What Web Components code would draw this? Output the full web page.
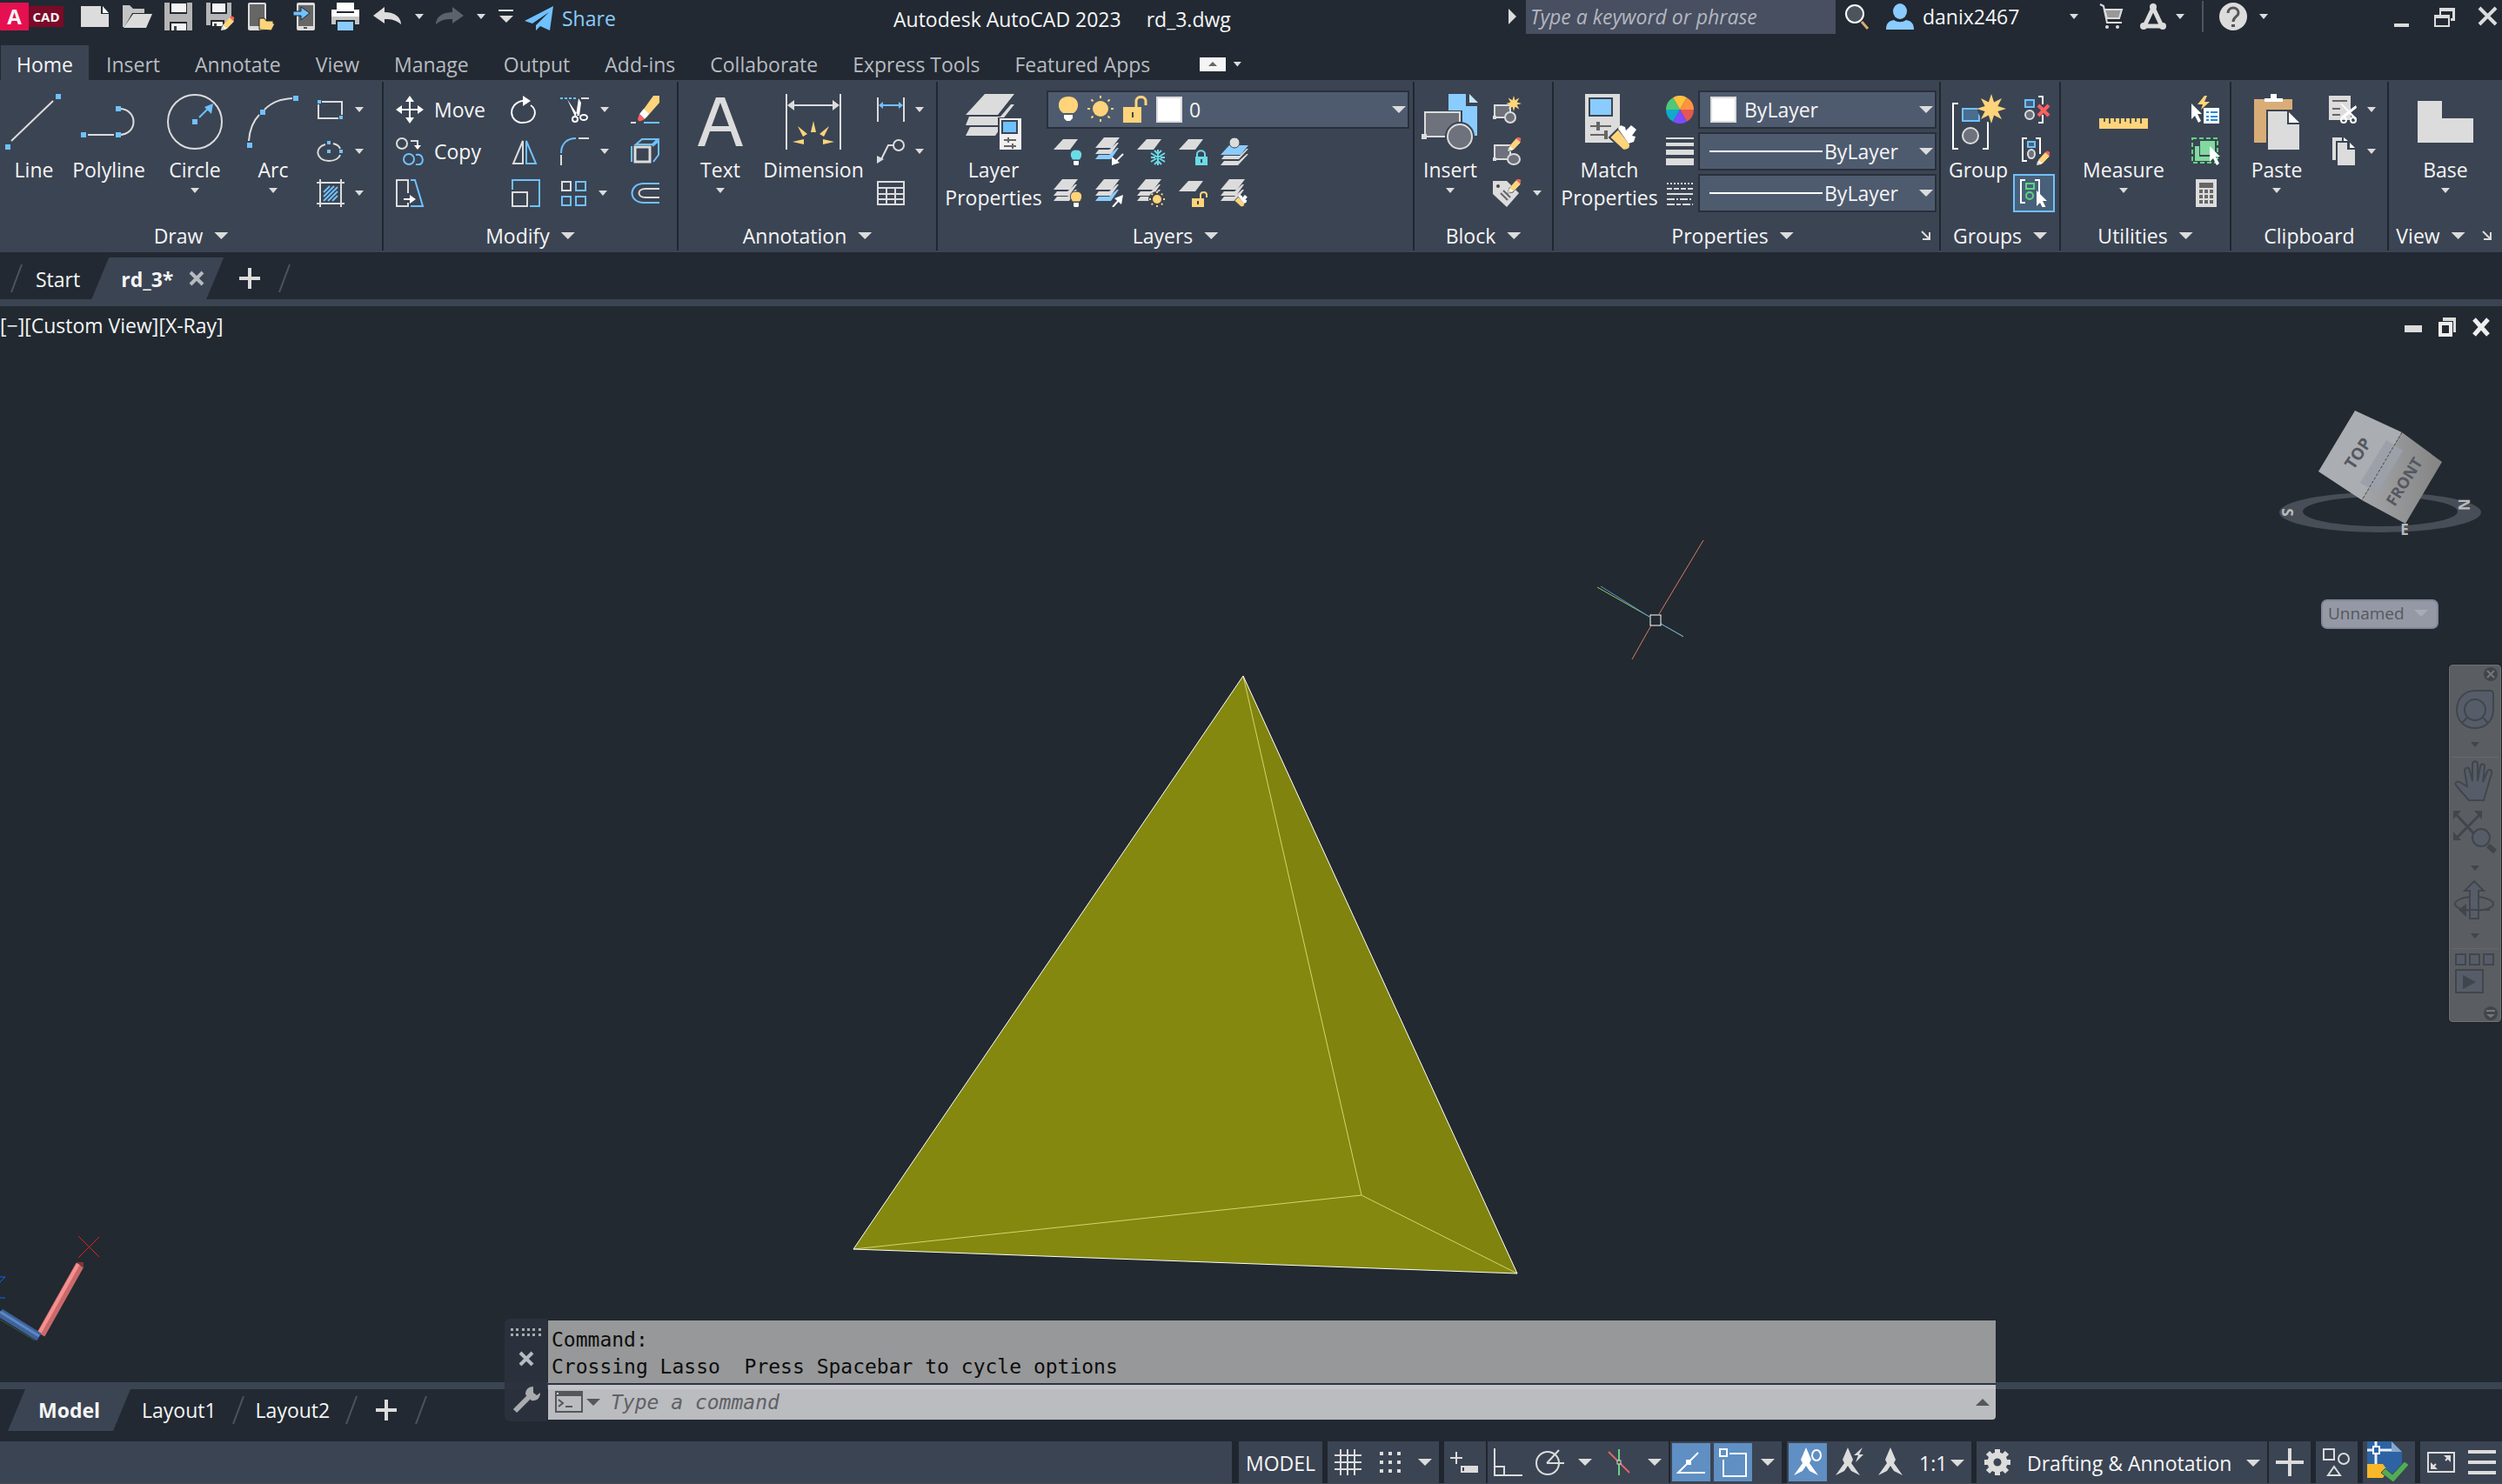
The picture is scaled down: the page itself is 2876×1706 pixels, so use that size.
<!DOCTYPE html>
<html lang="en">
<head>
<meta charset="utf-8">
<title>Autodesk AutoCAD 2023</title>
<style>
:root{--bg:#222932;--panel:#3b4453;--field:#4e5b6f;--edge:#29303b;--gap:#20262f;--text:#f5f5f5;--muted:#b8bbc0;--light:#dcdcdc;--blue:#6fc1ff;--hot:#5f8fc3}
html,body{margin:0;height:100%}
body{background:var(--bg);color:var(--text);font:23px/32px "Open Sans","Noto Sans",sans-serif;overflow:hidden}
</style>
</head>
<body>
<cad-app></cad-app>
<script>
const L='#dcdcdc',B='#6fc1ff',Y='#ffd47a',P='#3b4453',C='#6bdbe6';
const st=(d,c=L,w=2)=>`<path d="${d}" fill="none" stroke="${c}" stroke-width="${w}"/>`;
const fl=(d,c=L,x='')=>`<path d="${d}" fill="${c}" ${x}/>`;
const rc=(x,y,w,h,c=L,e='')=>`<rect x="${x}" y="${y}" width="${w}" height="${h}" fill="${c}" ${e}/>`;
const el=(x,y,rx,ry,c=L,w=2,f='none')=>`<ellipse cx="${x}" cy="${y}" rx="${rx}" ry="${ry}" fill="${f}" stroke="${c}" stroke-width="${w}"/>`;
const pencil=(x,y)=>`<g transform="translate(${x} ${y})">${fl('M0 16l2-6 8-8 5 4-9 9z','#fff',`stroke="${P}" stroke-width="1"`)}${fl('M2 10l8-9 5 4-8 9z',Y)}${fl('M10 1l1-1c3-1 5 1 4 3l-1 2z','#ff5f5f')}${fl('M0 16l1-5 4 4z',L)}</g>`;
const layers=(c3=L)=>fl('M10 0h18l-9 12H0z')+fl('M4 14l-4 5h18l9-13h-2l-9 8z')+fl('M4 20l-4 5h18l9-13h-2l-9 8z',c3);
const sheet=fl('M11 2h17l-9 12H0z');
const bulb=(c,x,y)=>`<g transform="translate(${x} ${y})">${fl('M6 0c8 0 8 8 4 12H2C-2 8-2 0 6 0z',c,`stroke="${P}"`)}${fl('M3 13h6v4l-2 2H5l-2-2z','#fff')}</g>`;
const cursor=(x,y)=>`<g transform="translate(${x} ${y})">${fl('M0 0v18l4-4 4 8 3-2-4-8h5z','#fff')}</g>`;
const sunrays=(cx,cy,r1,r2,w)=>{let s='';for(let i=0;i<8;i++){const a=i*Math.PI/4;s+=`M${cx+r1*Math.cos(a)} ${cy+r1*Math.sin(a)}L${cx+r2*Math.cos(a)} ${cy+r2*Math.sin(a)}`}return st(s,Y,w)};
const star=(cx,cy,r,q)=>{let s='';for(let i=0;i<16;i++){const a=i*Math.PI/8-Math.PI/2,k=i%2?q:r;s+=`${i?'L':'M'}${(cx+k*Math.cos(a)).toFixed(1)} ${(cy+k*Math.sin(a)).toFixed(1)}`}return fl(s+'z',Y)};
const brush=(x,y,s=1)=>`<g transform="translate(${x} ${y}) scale(${s})">${fl('M2 14l10-10 14 18c1 6-6 8-9 6z',Y,`stroke="${P}" stroke-width="2"`)}${fl('M12 4l3-4 5 2 1 4 6-6 6 5-5 7 4 1-2 6-6 2z','#fff')}</g>`;
const nd='#41464c',nf='#565d69';

const ICONS={
new:[32,32,fl('M0 4h23v9h9v15H0z')+fl('M25 4l7 8h-7z','#fff')],
open:[34,32,fl('M0 28V3h8l4 4h13v5H11L2 28z','#c4c4c4')+fl('M12 13h22l-7 16H1z')],
save:[32,32,fl('M0 0h32v32H0z','#b5b5b5')+rc(6,0,20,13,'#222932')+rc(8,1,17,10,'#f4f4f4')+rc(6,22,20,10,'#222932')+rc(8,24,17,8,'#f4f4f4')+rc(11,27,3,5,'#444')],
saveas:[34,32,fl('M0 0h29v26H0z','#b5b5b5')+rc(5,0,19,13,'#222932')+rc(7,1,15,10,'#f4f4f4')+rc(5,20,16,8,'#222932')+rc(7,22,12,5,'#f4f4f4')+rc(9,24,3,3,'#444')+pencil(17,16)],
openm:[32,32,rc(0,0,21,32,L,'rx="2"')+rc(2,2,17,25,'#666')+fl('M13 31V18h6l2 3h8v3h2l-4 8z',Y,'stroke="#222932"')],
savem:[32,32,rc(8,0,21,32,L,'rx="2"')+rc(10,3,17,24,'#666')+rc(16,28,4,2,'#555')+fl('M4 10h9V5l10 7-10 8v-5H4z',B,'stroke="#222932"')],
print:[32,32,rc(6,0,20,10,'#fff')+fl('M0 8h6v4h20V8h6v8H0z','#fff')+fl('M0 16h32v9h-5v-5H5v5H0z','#c6c6c6')+rc(7,22,18,10,'#8accff')],
undo:[33,32,fl('M0 15L13 5v6c12 0 19 6 19 14-6-5-10-6-19-6v5z')],
redo:[33,32,fl('M33 15L20 5v6C8 11 1 17 1 25c6-5 10-6 19-6v5z','#5c6269')],
custom:[18,16,rc(0,0,17,2)+fl('M1 7h16l-8 8z')],
share:[34,32,fl('M33 2L0 19l9 3L28 9 13 24v6l5-5 11 5z',B)],
expander:[10,18,fl('M0 0l9 9-9 9z')],
search:[32,32,el(12,13,10,10,'#fff',2,'#4c545e')+st('M20 22l7 8','#d9ad72',3)],
user:[34,32,el(17,10,8,9,'#8accff',0,'#8accff')+fl('M1 31c0-8 4-10 9-11 4 3 10 3 14 0 5 1 9 3 9 11z','#8accff')],
cart:[32,32,st('M3 2l4 2 4 19h17','#dcdcdc')+fl('M8 8h20l-3 10H11z','#999',`stroke="${L}" stroke-width="2"`)+el(11,28,2,2,L,0,L)+el(23,28,2,2,L,0,L)],
adsk:[32,32,st('M16 6L6 27h20z',L,5)+el(16,5,4,4,L,0,L)+el(5,27,4,4,L,0,L)+el(27,27,4,4,L,0,L)],
help:[34,34,el(17,17,16,16,L,0,'#dcdcdc')+st('M11 13c0-8 12-8 12 0 0 4-6 4-6 10','#555',3)+rc(15,26,4,3,'#555')],
min:[32,32,rc(8,24,17,4)],
restore:[32,32,fl('M10 6h18v15h-5v-3h2v-8H12v4h-2z')+`<path d="M5 15h16v12H5z" fill="none" stroke="${L}" stroke-width="2"/>`+rc(4,14,18,4)],
close:[32,32,st('M6 6l19 19M25 6L6 25',L,4)],
tinyup:[30,16,rc(0,0,30,16,'#f5f5f5')+fl('M10 10l5-5 5 5z','#666')],
slash:[14,32,st('M13 0L1 32','#4a5462',2)],
x:[18,18,st('M2 2l14 14M16 2L2 16','#b7bac0',4)],
plus:[24,24,rc(10,0,4,24)+rc(0,10,24,4)],

line:[66,64,st('M7 54L55 8')+rc(0,58,6,6,B)+rc(58,0,6,6,B)],
polyline:[64,64,st('M8 47h30M44 17c22 0 22 30 0 30')+rc(0,44,6,6,B)+rc(40,14,6,6,B)+rc(40,44,6,6,B)],
circle:[64,64,el(32,32,31,31)+rc(29,29,6,6,B)+st('M37 27l10-10',B)+fl('M53 11l-2 12-8-8z',B)],
arc:[60,64,st('M2 54C3 40 8 30 14 24M20 18C30 8 40 6 52 5')+rc(0,56,6,6,B)+rc(15,18,6,6,B)+rc(53,2,6,6,B)],
rect:[32,32,st('M6 7h23v15M2 10v16h23')+rc(1,5,4,4,B)+rc(26,23,4,4,B)],
ellipse:[32,32,st('M10 8C-3 11-1 27 14 27c7 0 12-3 13-7M19 7c4 1 7 3 8 6')+rc(12,4,4,4,B)+rc(12,14,4,4,B)+rc(26,14,4,4,B)],
hatch:[32,32,st('M4 0v32M28 0v32M0 4h32M0 28h32')+st('M8 15l7-7M8 20L20 8M8 25L24 9M13 25l11-11M18 25l6-6',B,2)],
move:[32,32,st('M16 4v24M4 16h24','#fff')+fl('M16 0l5 7H11zM16 32l5-7H11zM0 16l7-5v10zM32 16l-7-5v10z','#fff')],
copy:[32,32,el(7,7,6,6)+st('M17 4h8v6')+fl('M25 14l-4-5h8z','#fff')+el(15,25,6,6,B)+st('M23 20c10-3 11 14 0 11',B)],
stretch:[34,32,st('M14 16V1H1v30h13v-4')+st('M17 1h5l9 30H17',B)+st('M9 23h8','#fff')+fl('M23 23l-7-5v10z','#fff')],
rotate:[34,32,st('M13 6C-4 10-2 31 14 31c14 0 18-14 9-20M13 6h4','#fff')+fl('M14 0l9 6-9 6z','#fff')],
mirror:[32,32,st('M14 4v26H3z')+st('M18 4v26h11z',B)],
scale:[34,32,st('M2 12V1h31v30H22',B)+st('M2 15h17v16H2z')],
trim:[34,32,rc(0,2,3,2,B)+rc(5,2,3,2,B)+rc(10,2,3,2,B)+rc(15,2,3,2,B)+rc(24,2,9,2)+`<g transform="translate(8 3)">${fl('M0 1l12 18-3 2zM13 0l-3 20h4l2-15z','#fff')}${el(9,24,3,3,'#fff')}${el(19,22,4,3,'#fff')}</g>`],
fillet:[34,32,st('M1 18C1 7 8 1 18 1',B)+st('M21 1h12M1 20v12')],
array:[32,32,st('M18 3h11v10H18zM2 20h10v10H2zM18 20h11v10H18z',B)+st('M2 3h10v10H2z')],
erase:[34,32,fl('M26 0h7v8L18 25l-7-4z',Y)+fl('M15 15l-5 6 6 6 5-6z','#fff')+fl('M10 21l-2 6c1 4 5 2 8 0z','#ff6060')+rc(0,30,6,2)+rc(15,30,18,2,B)],
box:[34,32,st('M5 11h17v17H5z',L,3)+st('M1 10v18M6 8l7-6h18l-6 6zM25 10l7-6v16l-6 8',B)],
offset:[34,32,st('M33 5H15c-18 0-18 22 0 22h18',B)+st('M33 11H17c-10 0-10 10 0 10h16')],

text:[64,64,fl('M6 60L27 4h10l21 56h-8l-6-17H20l-6 17zM22 37h20L32 10z','#dcdcdc','fill-rule="evenodd"')],
dim:[64,64,st('M1 0v64M63 0v64M6 13h52')+fl('M2 13l8-6v12zM62 13l-8-6v12z')+fl('M32 31l3 13h-6zM14 37l11 9-5 3zM50 37l-11 9 5 3zM8 55l13-3v6zM56 55l-13-3v6z',Y)],
dims:[32,32,st('M1 2v28M31 2v28')+st('M4 11h24',B)+fl('M2 11l5-4v8zM30 11l-5-4v8z',B)],
leader:[32,32,el(25,9,6,6)+st('M19 9h-6L5 25')+fl('M0 30v-9l8 4z')],
table:[32,32,st('M1 3h30v26H1zM1 10h30M1 17h30M1 23h30M11 10v19M21 10v19')],
layerprops:[64,64,fl('M22 0h34L37 24H0zM4 26L0 36h37l19-24h-4L40 26z')+fl('M5 38l-5 10h34l4-6V38z')+rc(37,27,28,37,P)+rc(39,28,25,36,'#f0f0f0')+rc(41,30,19,16,P)+rc(43,32,15,12,B)+st('M44 53h14M44 60h14M49 50v6M54 57v6','#666')+st('M0 25h38l18-23M3 37h34',P,2)],
bulb:[24,32,fl('M11 1c13 0 14 14 6 19H5C-3 15-2 1 11 1z',Y)+fl('M6 22h10v4l-3 3H9l-3-3z','#fff')],
sun:[32,32,el(16,15,9,9,Y,0,Y)+sunrays(16,15,12,15,2)],
unlock:[32,32,rc(2,13,21,18,Y)+st('M17 13V6c0-6 11-6 11 0v5',Y,3)+rc(12,19,2,6,'#444')],
swatch:[30,32,rc(1,2,28,28,'#fff',`stroke="${L}" stroke-width="2"`)],
l1:[34,32,sheet+bulb(C,20,14)],
l2:[34,32,layers('#8accff')+st('M32 19l-8 8','#fff')+fl('M19 32V22l9 7z','#fff')],
l3:[34,32,sheet+st('M24 14v18M16 18l16 10M32 18L16 28M20 15l4 4 4-4M20 31l4-4 4 4M16 23h5M27 23h5',C,2)],
l4:[34,32,sheet+rc(19,22,14,10,C)+st('M21 23v-4c0-5 9-5 9 0v4',C)+rc(25,25,2,4,'#345')],
l5:[34,32,fl('M10 9h22l-9 11H0z','#8accff')+el(16,6,6,6,P,1,L)+fl('M4 21l-3 4h20l11-12h-2l-8 8zM4 27l-4 5h20l12-13h-2l-9 8z')],
l6:[34,32,layers()+bulb(Y,20,14)],
l7:[34,32,layers('#8accff')+st('M20 32l8-9','#fff')+fl('M32 18l-2 11-8-7z','#fff')],
l8:[34,32,layers()+el(23,23,10,9,P,0,P)+el(23,23,5,5,Y,0,Y)+sunrays(23,23,7,9,2)],
l9:[34,32,sheet+rc(15,22,14,10,Y)+st('M25 22v-4c0-4 7-4 7 0v3',Y)+rc(21,25,2,4,'#444')],
l10:[34,32,layers()+brush(15,18,.48)],
insert:[66,64,fl('M31 0h20v14h13v34H52L42 20H31z','#8accff')+fl('M55 0l10 10H55z','#c5e6ff')+rc(2,19,45,33,P)+rc(4,21,40,28,'#6d727c',`stroke="${L}" stroke-width="2"`)+rc(0,46,6,6)+el(44,49,17,17,P,0,P)+el(44,49,14,14,L,2,'#6d727c')],
bnew:[34,32,rc(2,11,18,14,'#6d727c',`stroke="${L}" stroke-width="2"`)+rc(0,23,4,4)+el(20,25,6,6,L,2,'#6d727c')+star(24,9,9,4)],
bedit:[34,32,rc(2,9,18,16,'#6d727c',`stroke="${L}" stroke-width="2"`)+rc(0,23,4,4)+el(24,25,7,6,L,2,'#6d727c')+pencil(17,0)],
battr:[34,32,fl('M0 2h16l14 14-14 16L0 17z')+el(6,8,2,2,'#444',0,'#444')+st('M9 16l8 8M12 13l8 8','#666')+pencil(17,0)],
match:[64,64,rc(4,0,40,56)+rc(8,4,28,22,P)+rc(10,6,24,18,'#8accff')+st('M10 37h24M10 47h18','#666')+rc(17,32,4,10,'#666')+rc(26,42,4,10,'#666')+brush(30,36)],
wheel:[32,32,['#ffc13d','#ff9440','#e65656','#7b4cff','#10aacc','#4fc978'].map((c,i)=>{const a=(i*60-120)*Math.PI/180,b=a+Math.PI/3;return fl(`M16 16L${16+16*Math.cos(a)} ${16+16*Math.sin(a)}A16 16 0 0 1 ${16+16*Math.cos(b)} ${16+16*Math.sin(b)}z`,c)}).join('')],
weights:[32,32,rc(0,0,32,2)+rc(0,6,32,4)+rc(0,14,32,6)+rc(0,24,32,8)],
types:[32,32,`<g stroke="${L}" stroke-width="2"><path d="M1 5h30" stroke-dasharray="2 2"/><path d="M1 11h30" stroke-dasharray="6 2"/><path d="M1 17h30"/><path d="M1 23h30" stroke-dasharray="9 2 2 2"/><path d="M1 29h30" stroke-dasharray="9 2 5 2"/></g>`],
strokeline:[132,4,rc(0,1,130,2,'#fff')],
launch:[12,12,st('M1 1l8 8M10 2v8H2',L,2)],
group:[64,64,st('M9 11H3v52h6M37 63h6V30','#fff')+rc(14,17,19,14,'#4a6d90',`stroke="${B}" stroke-width="2"`)+el(23,48,9,9,L,2,'#6d727c')+`<circle cx="48" cy="16" r="17" fill="${P}"/>`+star(47,17,17,8)],
ungroup:[34,32,rc(5,5,10,8,'#42617f',`stroke="${B}" stroke-width="2"`)+el(10,22,5,5,L,2,'#6d727c')+st('M20 1h5v9M20 31h5v-9','#fff')+st('M20 11l12 12M32 11L20 23','#ff5f5f',4)],
gedit:[34,32,st('M7 1H2v26h5M17 1h5v18','#fff')+rc(8,5,8,6,'#42617f',`stroke="${B}" stroke-width="2"`)+el(12,19,4,5,L,2,'#6d727c')+pencil(18,16)],
gsel:[34,32,st('M7 1H2v26h5M18 1h5v16','#fff')+rc(8,5,9,6,'none','stroke="#5ad67d" stroke-width="2"')+el(12,19,4,4,'#5ad67d',2)+cursor(20,13)],
ruler:[64,64,rc(4,28,56,12,Y)+st('M10 28v4M16 28v6M22 28v4M28 28v6M34 28v4M40 28v6M46 28v4M52 28v6','#555')],
qsel:[34,32,cursor(0,9)+fl('M15 0L7 10h6l-2 6 10-9h-6l3-7z',Y)+rc(14,14,18,18,'#fff')+st('M17 19h3M22 19h8M17 24h3M22 24h8M17 28h3M22 28h8','#1f8ae0')],
selall:[34,32,`<rect x="1" y="1" width="29" height="28" fill="none" stroke="#5ad67d" stroke-width="2" stroke-dasharray="5 3"/>`+fl('M4 10h5v12h12v5H4z','#82d9a0')+rc(10,4,17,16,'#82d9a0')+cursor(21,10)],
calc:[32,32,rc(5,0,24,32)+rc(9,4,16,6,'#666')+`<g fill="#666">${[12,18,24].map(y=>[9,15,21].map(x=>rc(x,y,4,4,'#666')).join('')).join('')}</g>`],
paste:[64,64,fl('M6 6h44v12H20v38H6z','#d9ad78')+fl('M18 9V5h7V0h7v5h7v4z','#fff')+rc(20,18,40,46,P)+fl('M22 20h22v15h14v29H22z')+fl('M46 21l12 12H46z','#fff')],
cut:[32,32,rc(0,0,25,28)+st('M4 6h17M4 15h9M4 22h9','#666')+`<g transform="translate(12 9)">${fl('M1 0h2l17 17-2 2zM19 2l1 3L5 17l-3-2z','#fff')}${el(5,19,3,3,'#fff')}${el(16,19,3,3,'#fff')}</g>`],
copyc:[32,32,fl('M4 0h11v4H8v22H4z')+fl('M17 0l5 4h-5z','#fff')+fl('M10 6h11v8h9v18H10z')+fl('M24 6l6 6h-6z','#fff')],
base:[64,64,fl('M0 8h28v20h36v28H0z')],

grid:[32,32,st('M0 8h31M0 16h31M0 24h31M7 1v30M15 1v30M23 1v30',L,2)],
snap:[32,32,`<g>${[4,14,24].map(y=>[4,14,24].map(x=>rc(x,y,4,4)).join('')).join('')}</g>`],
dyn:[34,34,st('M0 12h14M7 5v14')+rc(12,21,20,8)+rc(14,23,2,4,P)],
ortho:[34,34,st('M1 1v31h32M1 22h11v10')],
polar:[34,32,el(14,17,13,13)+st('M13 17h20M13 17L27 2')],
iso:[30,32,st('M2 4l24 24','#e06666')+st('M14 1v30','#62d77f')+rc(12,14,4,4,P,`stroke="${L}"`)],
track:[34,32,st('M25 5L2 28h31','#fff')+rc(11,13,6,6,'#fff')],
osnap:[34,34,st('M13 7h19v26H6V14','#fff')+st('M2 2h8v8H2z','#fff')],
anno:[34,34,fl('M15 0l6 14-2 4 10 14-10-5-4-6-4 6-10 5L11 18l-2-4z','#fff')+el(27,9,5,6,'#fff')],
anno2:[34,34,fl('M15 0l6 14-2 4 10 14-10-5-4-6-4 6-10 5L11 18l-2-4z')+fl('M32 0l-10 9h5l-3 8 9-9h-5z')],
anno3:[32,34,fl('M15 0l6 14-2 4 10 14-10-5-4-6-4 6-10 5L11 18l-2-4z')],
gear:[32,32,el(16,16,8,8,L,7)+`<g stroke="${L}" stroke-width="6"><path d="M16 1v5M16 26v5M1 16h5M26 16h5M5 5l4 4M23 23l4 4M27 5l-4 4M9 23l-4 4"/></g>`],
bigplus:[32,32,rc(14,0,4,32)+rc(0,14,32,4)],
shapes:[34,34,st('M2 2h12v12H2z')+el(25,13,6,6)+st('M14 22l7 10H7z')],
trusted:[50,48,fl('M0 0h28v12h12v20l-6 6H0z','#2d63a3')+fl('M28 0l12 12H28z','#86a8cf')+fl('M0 26h18l6 8-6 8H0z','#f7b728')+st('M0 10h28M10 0v26','#e8f0f8',3)+rc(7,6,7,8,'#2d63a3','stroke="#fff" stroke-width="2"')+fl('M16 36l5-5 8 7 14-15 5 4-18 20z','#50ad54','stroke="#3b4453"')],
expand:[34,32,st('M2 5h30v22H2z')+fl('M28 8v8l-8-8zM5 24v-8l8 8z')+st('M27 9l-5 5M6 23l5-5')],
menu:[32,32,rc(0,2,32,4)+rc(0,14,32,4)+rc(0,26,32,4)],

grip:[36,10,[0,6,13,19,25,32].map(x=>rc(x,0,3,3,'#a9abae')+rc(x,6,3,3,'#a9abae')).join('')],
wrench:[32,32,st('M3 28L20 11','#a9abae',6)+fl('M15 9c0-6 4-9 9-9v7l4 3 4-3c0 7-5 10-10 9z','#a9abae')],
prompt:[32,26,rc(1,1,30,23,'none','stroke="#54575b" stroke-width="2"')+rc(0,0,32,6,'#54575b')+rc(2,2,2,2,'#ddd')+st('M4 10l5 4-5 4M12 18h8','#54575b')],
vmin:[24,24,rc(2,10,20,8)],
vrest:[24,24,fl('M7 1h15v17h-3V5H7z')+st('M4 8h12v13H4z','#eee',4)],
vclose:[24,24,st('M4 3l16 18M20 3L4 21','#eee',5)],
nclose:[18,18,el(9,9,8,8,nd,0,nd)+st('M5 5l8 8M13 5l-8 8','#777',2)],
nmenu:[18,18,el(9,9,8,8,nd,0,nd)+fl('M4 5h10v2H4zM4 10h10l-5 4z','#777')],
nwheel:[46,48,fl('M23 2h17c3 0 4 1 4 4v18c0 28-42 28-42 0C2 10 12 2 23 2z',nf,`stroke="${nd}" stroke-width="2"`)+el(23,24,12,12,nd)+st('M14 33l-6 6M32 33l6 6',nd)],
nhand:[48,50,fl('M17 46L3 30c-4-5 1-7 5-4l7 4-3-18c0-4 5-5 6 0l3 12V5c0-5 6-5 6 0v19l3-17c1-4 6-3 5 1l-2 17 5-12c2-4 6-2 5 2L34 46z',nf,`stroke="${nd}" stroke-width="2"`)],
nzoom:[50,50,st('M4 5l24 26M30 5L4 31',nd,3)+fl('M0 0h9L0 10zM33 0h-9l9 10zM0 34h9L0 24z',nd)+st('M40 40l8 7',nd,6)+el(32,31,10,10,nd,2,nf)],
norbit:[48,48,el(23,27,22,8,nd,2)+fl('M18 44V12h-6L23 1l11 11h-6v32z',nf,`stroke="${nd}" stroke-width="2"`)+st('M14 34h27',nd)+fl('M5 34l9-7v15z',nd)],
nmotion:[48,50,`<g fill="${nf}" stroke="${nd}" stroke-width="2"><path d="M2 3h11v12H2zM18 3h11v12H18zM34 3h11v12H34zM2 21h31v26H2z"/></g>`+fl('M10 27l15 8-15 8z',nd)]
};

const CARET=`.caret{flex:none;width:10px;height:6px;background:var(--light);clip-path:polygon(0 0,100% 0,50% 100%)}.caret.big{width:16px;height:8px}`;
const RESET=`*{box-sizing:border-box}button,select,input{font:inherit;color:inherit;background:none;border:0;margin:0;padding:0;appearance:none;text-align:inherit;border-radius:0;outline:0}button{cursor:pointer;white-space:nowrap}`;
const define=(name,css,html)=>customElements.define(name,class extends HTMLElement{
  constructor(){super();this.attachShadow({mode:'open'})}
  connectedCallback(){this.shadowRoot.innerHTML=`<style>${RESET}${CARET}${css}</style>${typeof html==='function'?html(this):html}`}
});
const ic=n=>`<cad-icon name="${n}"></cad-icon>`;

define('cad-icon',`:host{display:block;flex:none}svg{display:block}`,e=>{
  const [w,h,m]=ICONS[e.getAttribute('name')];
  return `<svg width="${w}" height="${h}" viewBox="0 0 ${w} ${h}" aria-hidden="true">${m}</svg>`});

define('title-bar',`:host{display:flex;height:52px;align-items:flex-start}
.row{display:flex;align-items:center;height:38px}
.logo{display:flex;font-weight:700;align-items:center;height:38px}
.a{width:33px;height:32px;background:#e51050;display:grid;place-items:center;font-size:24px}
.cad{width:40px;height:24px;background:#7b0a28;display:grid;place-items:center;font-size:15px;line-height:24px}
.quick{gap:0;padding-left:20px}.quick button{width:48px}.quick .drop{width:23px}
.quick .custom{width:24px;margin-left:2px}
.share{display:flex;align-items:center;gap:9px;color:#8accff;height:42px;margin-left:6px}
.title{flex:1;display:flex;justify-content:center;gap:29px;height:44px;align-items:center;white-space:nowrap}
.find{width:356px;height:39px;background:#474f61;padding:0 6px 0 5px;font-style:italic;margin:0 10px 0 10px}
.find::placeholder{color:#b4b7bf;opacity:1}
.user{display:flex;align-items:center;width:222px;margin:0 22px 0 15px;gap:9px}.user .caret{margin-left:auto}
.acct{display:flex;align-items:center;width:52px;gap:10px;margin:0 20px 0 16px}
.sep{width:2px;height:36px;background:#4a5462}
.help{display:flex;align-items:center;gap:13px;margin:0 137px 0 17px}
.win{gap:18px}`,`
<div class="logo" aria-label="AutoCAD"><span class="a">A</span><span class="cad">CAD</span></div>
<div class="row quick">
${[['new','New'],['open','Open'],['save','Save'],['saveas','Save As'],['openm','Open from Web'],['savem','Save to Web'],['print','Plot']].map(([n,t])=>`<button aria-label="${t}">${ic(n)}</button>`).join('')}
<button aria-label="Undo">${ic('undo')}</button><button class="drop" aria-label="Undo list"><div class="caret"></div></button>
<button aria-label="Redo">${ic('redo')}</button><button class="drop" aria-label="Redo list"><div class="caret"></div></button>
<button class="custom" aria-label="Customize">${ic('custom')}</button></div>
<button class="share row">${ic('share')}<span>Share</span></button>
<div class="title"><span>Autodesk AutoCAD 2023</span><span>rd_3.dwg</span></div>
<div class="row"><button aria-label="Collapse search">${ic('expander')}</button>
<input class="find" type="search" placeholder="Type a keyword or phrase" aria-label="Type a keyword or phrase">
<button aria-label="Search">${ic('search')}</button>
<button class="user">${ic('user')}<span>danix2467</span><div class="caret"></div></button>
<button aria-label="App Store">${ic('cart')}</button>
<button class="acct" aria-label="Autodesk account">${ic('adsk')}<div class="caret"></div></button>
<div class="sep"></div><button class="help" aria-label="Help">${ic('help')}<div class="caret"></div></button></div>
<div class="row win"><button aria-label="Minimize">${ic('min')}</button><button aria-label="Restore">${ic('restore')}</button><button aria-label="Close">${ic('close')}</button></div>`);

define('ribbon-tabs',`:host{display:flex;height:40px;padding-left:1px;color:var(--muted)}
button{padding:3px 20px 0;height:40px;line-height:36px}
.on{background:var(--panel);color:var(--text);padding:3px 18px 0}
.mini{display:flex;align-items:center;gap:8px;margin-left:17px}`,
`<button class="on">Home</button>${['Insert','Annotate','View','Manage','Output','Add-ins','Collaborate','Express Tools','Featured Apps'].map(t=>`<button>${t}</button>`).join('')}<button class="mini" aria-label="Minimize ribbon">${ic('tinyup')}<div class="caret"></div></button>`);

define('tool-large',`:host{display:block;flex:none}button{display:flex;flex-direction:column;align-items:center;width:100%;height:144px;padding-top:6px;text-align:center}
.t{margin-top:7px}.caret{margin-top:5px}`,
e=>`<button>${ic(e.getAttribute('icon'))}<span class="t"><slot></slot></span>${e.hasAttribute('caret')?'<div class="caret"></div>':''}</button>`);

define('tool-small',`:host{display:block}button{display:flex;align-items:center;height:48px;gap:12px}
:host([active]) button{width:48px;height:44px;margin:2px 0 2px -9px;justify-content:center;background:#48607a;border:2px solid var(--blue)}`,
e=>`<button aria-label="${e.getAttribute('label')||e.textContent}">${ic(e.getAttribute('icon'))}<slot></slot>${e.hasAttribute('caret')?'<div class="caret"></div>':''}</button>`);

define('ribbon-panel',`:host{display:flex;flex-direction:column;flex:none;position:relative}
:host::after{content:"";position:absolute;right:0;top:2px;bottom:2px;width:2px;background:var(--gap)}
:host([last])::after{display:none}
.body{display:flex;height:144px;margin-top:10px}
.foot{display:flex;height:44px;padding-top:6px}
.foot button{flex:1;display:flex;align-items:center;justify-content:center;gap:13px;padding-right:2px}
.foot .launch{flex:none;width:32px}`,
e=>`<div class="body"><slot></slot></div><div class="foot"><button>${e.getAttribute('heading')}${e.hasAttribute('plain')?'':'<div class="caret big"></div>'}</button>${e.hasAttribute('launcher')?`<button class="launch" aria-label="${e.getAttribute('heading')} settings">${ic('launch')}</button>`:''}</div>`);

define('combo-box',`:host{display:flex;align-items:center;height:44px;margin:2px 0;background:var(--field);border:2px solid var(--edge);padding:0 2px 0 11px}
select{flex:1;min-width:0;height:40px;line-height:40px}option{color:#000}`,
e=>`<slot></slot><select aria-label="${e.getAttribute('label')}"><option>${e.getAttribute('value')}</option></select><div class="caret big"></div>`);

const sm=(i,l,c='')=>`<tool-small icon="${i}" label="${l}" ${c}></tool-small>`;
define('ribbon-bar',`:host{display:flex;background:var(--panel);height:198px}
.col{display:grid;grid-auto-rows:48px;align-content:start;flex:none}
.draw{width:441px}.modify{width:339px}.anno{width:298px}.layers{width:548px}.block{width:160px}.props{width:445px}.groups{width:138px}.utils{width:196px}.clip{width:181px}.view{flex:1}
.w76{width:76px}.w78{width:78px}.w82{width:82px}.w86{width:86px}.w94{width:94px}.w96{width:96px}.w104{width:104px}.w118{width:118px}.w120{width:120px;margin-left:4px}.w128{width:128px}.w144{width:144px}.full{width:100%}
.m1{width:132px;margin-left:14px}.m2{width:57px}.m3{width:81px}
.g6{margin-left:6px}.g8{margin-left:8px}.g12{margin-left:12px}.g14{margin-left:14px}
.lay{flex:1;margin:0 6px 0 1px}.lay combo-box{gap:8px;padding-left:12px}
.lrow{display:flex;gap:16px;height:48px;align-items:center;padding-left:8px}.lrow tool-small{width:32px}
.pcol{flex:1;margin:0 5px}.icons{justify-items:center;width:32px;margin-left:1px}
.sw{gap:9px;padding-left:12px}`,`
<ribbon-panel class="draw" heading="Draw"><tool-large class="w78" icon="line">Line</tool-large><tool-large class="w94" icon="polyline">Polyline</tool-large><tool-large class="w104" icon="circle" caret>Circle</tool-large><tool-large class="w76" icon="arc" caret>Arc</tool-large><div class="col g12">${sm('rect','Rectangle','caret')}${sm('ellipse','Ellipse','caret')}${sm('hatch','Hatch','caret')}</div></ribbon-panel>
<ribbon-panel class="modify" heading="Modify"><div class="col m1"><tool-small icon="move">Move</tool-small><tool-small icon="copy">Copy</tool-small>${sm('stretch','Stretch')}</div><div class="col m2">${sm('rotate','Rotate')}${sm('mirror','Mirror')}${sm('scale','Scale')}</div><div class="col m3">${sm('trim','Trim','caret')}${sm('fillet','Fillet','caret')}${sm('array','Array','caret')}</div><div class="col">${sm('erase','Erase')}${sm('box','Explode')}${sm('offset','Offset')}</div></ribbon-panel>
<ribbon-panel class="anno" heading="Annotation"><tool-large class="w96" icon="text" caret>Text</tool-large><tool-large class="w118" icon="dim">Dimension</tool-large><div class="col g14">${sm('dims','Linear','caret')}${sm('leader','Leader','caret')}${sm('table','Table')}</div></ribbon-panel>
<ribbon-panel class="layers" heading="Layers"><tool-large class="w120" icon="layerprops">Layer<br>Properties</tool-large>
<div class="lay"><combo-box label="Layer" value="0">${ic('bulb')}${ic('sun')}${ic('unlock')}${ic('swatch')}</combo-box>
<div class="lrow">${sm('l1','Layer Off')}${sm('l2','Isolate')}${sm('l3','Freeze')}${sm('l4','Lock')}${sm('l5','Make Current')}</div>
<div class="lrow">${sm('l6','Layers On')}${sm('l7','Unisolate')}${sm('l8','Thaw')}${sm('l9','Unlock')}${sm('l10','Match Layer')}</div></div></ribbon-panel>
<ribbon-panel class="block" heading="Block"><tool-large class="w82" icon="insert" caret>Insert</tool-large><div class="col g8">${sm('bnew','Create')}${sm('bedit','Edit')}${sm('battr','Edit Attributes','caret')}</div></ribbon-panel>
<ribbon-panel class="props" heading="Properties" launcher><tool-large class="w128" icon="match">Match<br>Properties</tool-large>
<div class="col icons">${sm('wheel','Color')}${sm('weights','Lineweight')}${sm('types','Linetype')}</div>
<div class="col pcol"><combo-box class="sw" label="Object Color" value="ByLayer">${ic('swatch')}</combo-box><combo-box label="Lineweight" value="ByLayer">${ic('strokeline')}</combo-box><combo-box label="Linetype" value="ByLayer">${ic('strokeline')}</combo-box></div></ribbon-panel>
<ribbon-panel class="groups" heading="Groups"><tool-large class="w86" icon="group">Group</tool-large><div class="col g6">${sm('ungroup','Ungroup')}${sm('gedit','Group Edit')}${sm('gsel','Group Selection On/Off','active')}</div></ribbon-panel>
<ribbon-panel class="utils" heading="Utilities"><tool-large class="w144" icon="ruler" caret>Measure</tool-large><div class="col g6">${sm('qsel','Quick Select')}${sm('selall','Select All')}${sm('calc','Quick Calculator')}</div></ribbon-panel>
<ribbon-panel class="clip" heading="Clipboard" plain><tool-large class="w104" icon="paste" caret>Paste</tool-large><div class="col g8">${sm('cut','Cut','caret')}${sm('copyc','Copy Clip','caret')}</div></ribbon-panel>
<ribbon-panel class="view" heading="View" launcher last><tool-large class="full" icon="base" caret>Base</tool-large></ribbon-panel>`);

const TRAP=`.trap{background:var(--panel);font-weight:700;height:48px;clip-path:polygon(20px 0,100% 0,calc(100% - 20px) 100%,0 100%);display:flex;align-items:center}`;
define('file-tabs',`:host{display:flex;height:62px;border-bottom:8px solid var(--panel);padding:6px 0 0 12px;align-items:center}${TRAP}
.start{padding:2px 13px 0 15px}.trap{gap:18px;padding:0 24px 0 34px;width:152px}.trap span{padding-top:2px}.add{margin:0 21px 0 18px}`,
`${ic('slash')}<button class="start">Start</button><div class="trap"><span>rd_3*</span><button aria-label="Close rd_3">${ic('x')}</button></div><button class="add" aria-label="New drawing">${ic('plus')}</button>${ic('slash')}`);

define('layout-tabs',`:host{display:flex;height:68px;border-top:8px solid var(--panel);padding:0 0 12px 9px;align-items:center}${TRAP}
.trap{width:141px;justify-content:center}.lay{padding:0 18px 0 13px}.add{margin:0 21px}`,
`<button class="trap">Model</button><button class="lay">Layout1</button>${ic('slash')}<button class="lay">Layout2</button>${ic('slash')}<button class="add" aria-label="New layout">${ic('plus')}</button>${ic('slash')}`);

define('view-cube',`:host{display:block}svg{display:block}text{font-family:"Open Sans",sans-serif;font-weight:700}`,`
<svg width="260" height="170" viewBox="2606 452 260 170" role="img" aria-label="View cube">
<defs><linearGradient id="f" x1="0" x2="1"><stop offset="0" stop-color="#a3a5a8"/><stop offset="1" stop-color="#848484"/></linearGradient></defs>
<path fill="#484e57" fill-rule="evenodd" d="M2620 589a116 23 0 0 1 232 0a116 23 0 0 1-232 0zM2647 588a89 17 0 0 0 178 0a89 17 0 0 0-178 0z"/>
<path d="M2707 472L2761 497 2715 575 2665 542z" fill="#aaadb1"/>
<path d="M2761 497L2807 531 2765 602 2715 575z" fill="url(#f)"/>
<path d="M2743 506L2762 518 2733 567 2713 555z" fill="#9ca0a9"/>
<path d="M2761 497L2715 575" stroke="#444" stroke-dasharray="3 2" fill="none"/>
<g fill="#54585f" text-anchor="middle"><text x="2716" y="525" font-size="19" transform="rotate(-56 2716 525)">TOP</text><text x="2769" y="557" font-size="18" transform="rotate(-58 2769 557)">FRONT</text></g>
<g fill="#b8babc" text-anchor="middle" font-size="17"><text x="2623" y="589" transform="rotate(90 2623 589)">S</text><text x="2764" y="615">E</text><text x="2839" y="580" transform="rotate(-90 2839 580)">N</text></g></svg>`);

define('nav-bar',`:host{display:flex;flex-direction:column;align-items:center;width:60px;height:411px;background:#5a5e62;border:1px solid #6c7074;border-radius:4px;box-shadow:0 0 0 1px #1a1f26;padding-top:1px}
.end{align-self:flex-end;margin-right:2px}button{display:block}.c{--light:#41464c;margin:13px 0 11px}hr{width:54px;border:0;border-top:1px solid #64686c;margin:0}
.n3{margin-top:3px}.n8{margin-top:8px}.last{margin-top:auto}`,`
<button class="end" aria-label="Close navigation bar">${ic('nclose')}</button><button class="n8" aria-label="Steering wheel">${ic('nwheel')}</button><div class="caret c"></div><hr>
<button class="n3" aria-label="Pan">${ic('nhand')}</button><button class="n8" aria-label="Zoom">${ic('nzoom')}</button><div class="caret c"></div>
<button aria-label="Orbit">${ic('norbit')}</button><div class="caret c"></div><hr><button class="n3" aria-label="ShowMotion">${ic('nmotion')}</button><button class="end last" aria-label="Navigation options">${ic('nmenu')}</button>`);

define('drawing-view',`:host{display:block;position:relative;flex:1;min-height:0;overflow:hidden;background:#222930}
.model{position:absolute;inset:0;width:100%;height:100%}
.ucs{position:absolute;left:0;bottom:40px}
.label{position:absolute;left:0;top:6px;display:flex}
.win{position:absolute;right:12px;top:12px;display:flex;gap:15px}
view-cube{position:absolute;right:10px;top:100px}
.ucsname{position:absolute;right:73px;top:337px;width:135px;height:34px;background:#9599a6;border:2px solid #84879a;border-radius:7px;color:#55585e;font-size:19px;line-height:28px;padding:0 10px 2px 6px;display:flex;align-items:center;justify-content:space-between;--light:#a8acb7}
nav-bar{position:absolute;right:1px;top:412px}`,`
<svg class="model" viewBox="0 352 2876 1237" role="img" aria-label="Pyramid model">
<path d="M1429 777L981 1436L1744 1464z" fill="#84880e"/><path d="M1429 777L1565 1374L1744 1464z" fill="#80840e"/>
<path d="M1429 777L1565 1374L1744 1464M981 1436L1565 1374" fill="none" stroke="#d4d570"/>
<path d="M1429 777L981 1436L1744 1464z" fill="none" stroke="#fff"/>
<path d="M1958 621L1907 706M1898 719L1876 758" stroke="#d77b60"/><path d="M1836 675L1896 709M1909 717L1935 732" stroke="#8fce5a"/><path d="M1840 674L1896 709M1909 717L1934 731" stroke="#5f93d6"/>
<rect x="1897" y="707" width="12" height="12" fill="none" stroke="#fff"/></svg>
<svg class="ucs" width="130" height="140" viewBox="0 1410 130 140" aria-hidden="true">
<path d="M90 1422l24 24M114 1423l-24 24" stroke="#e02020"/><path d="M47 1535L92 1455" stroke="#c96a6a" stroke-width="10"/><path d="M45 1534L90 1454" stroke="#f79090" stroke-width="4"/><path d="M88 1452l8 0v7z" fill="#7c3838"/>
<path d="M0 1510L45 1538" stroke="#3e629c" stroke-width="10"/><path d="M0 1509L45 1537" stroke="#5f87c2" stroke-width="3"/><path d="M0 1518L40 1542" stroke="#3a5a32"/>
<path d="M0 1469h6l-6 6M0 1493h6" stroke="#1560ff" fill="none"/></svg>
<div class="label"><button>[−]</button><button>[Custom View]</button><button>[X-Ray]</button></div>
<div class="win"><button aria-label="Minimize drawing">${ic('vmin')}</button><button aria-label="Restore drawing">${ic('vrest')}</button><button aria-label="Close drawing">${ic('vclose')}</button></div>
<view-cube></view-cube><button class="ucsname">Unnamed<div class="caret big"></div></button><nav-bar></nav-bar>`);

define('command-line',`:host{display:flex;position:absolute;left:580px;right:582px;bottom:72px;height:118px;font:23px/31px "DejaVu Sans Mono","Liberation Mono",monospace}
.grip{width:49px;height:118px;background:rgba(43,49,61,.93);border-radius:6px 0 0 6px;display:flex;flex-direction:column;align-items:center;padding-top:11px}
.grip button{margin-top:16px}.grip .tool{margin-top:23px}
.main{flex:1;margin:2px 0 2px 1px;display:flex;flex-direction:column;gap:2px;background:#2b3441;border-radius:0 0 4px 0;overflow:hidden}
.log{background:#979899;color:#0d0d0d;height:72px;padding:7px 0 0 4px;white-space:pre}
.in{flex:1;background:linear-gradient(#c3c5ca 5px,#bbbcc0 5px);display:flex;align-items:center;padding:0 7px 0 8px;--light:#54575b}
.in button{display:flex;align-items:center;gap:4px}
input{flex:1;margin-left:12px;font-style:italic;color:#222;height:40px}input::placeholder{color:#5f6165;opacity:1}.up{transform:rotate(180deg)}`,`
<div class="grip">${ic('grip')}<button aria-label="Close command line">${ic('x')}</button><button class="tool" aria-label="Customize">${ic('wrench')}</button></div>
<div class="main"><div class="log">Command:
Crossing Lasso  Press Spacebar to cycle options</div>
<div class="in"><button aria-label="Recent commands">${ic('prompt')}<div class="caret big"></div></button><input placeholder="Type a command" aria-label="Type a command"><button aria-label="Command history"><div class="caret big up"></div></button></div></div>`);

const sb=(i,l,k='')=>`<button class="i ${k}" aria-label="${l}">${ic(i)}</button>`,sd=l=>`<button class="d" aria-label="${l} options"><div class="caret big"></div></button>`;
define('status-bar',`:host{display:flex;height:49px;background:var(--gap);border-bottom:1px solid #454b55}
.s{display:flex;background:var(--panel);height:48px;margin-right:6px;align-items:center;flex:none}
.s.t{margin-right:2px}.s.fill{flex:1;margin-right:8px}.s.z{margin-right:0}
button{height:48px}.i{width:48px;display:grid;place-items:center}.d{width:32px;display:grid;place-items:center}
.on{width:44px;height:44px;margin:0 2px;background:var(--hot)}.m{width:96px;text-align:center;padding-top:2px}
.cl{width:60px}.e{width:46px}.sc{display:flex;align-items:center;justify-content:space-between;padding:2px 8px 0;width:68px}.ws{display:flex;align-items:center;justify-content:space-between;padding:2px 8px 0 10px;width:286px}`,`
<div class="s fill"></div><div class="s"><button class="m">MODEL</button></div>
<div class="s">${sb('grid','Grid')}${sb('snap','Snap')}${sd('Snap')}</div><div class="s t">${sb('dyn','Dynamic Input')}</div>
<div class="s t">${sb('ortho','Ortho')}${sb('polar','Polar')}${sd('Polar')}${sb('iso','Isodraft')}${sd('Isodraft')}</div>
<div class="s">${sb('track','Object Snap Tracking','on')}${sb('osnap','Object Snap','on')}${sd('Object Snap')}</div>
<div class="s">${sb('anno','Annotation Visibility','on')}${sb('anno2','AutoScale')}${sb('anno3','Annotation Scale')}<button class="sc">1:1<div class="caret big"></div></button></div>
<div class="s t">${sb('gear','Workspace')}<button class="ws">Drafting &amp; Annotation<div class="caret big"></div></button></div>
<div class="s">${sb('bigplus','Annotation Monitor')}</div><div class="s">${sb('shapes','Isolate Objects')}</div><div class="s">${sb('trusted','Trusted DWG','cl')}</div>
<div class="s z">${sb('expand','Clean Screen')}${sb('menu','Customization','e')}</div>`);

define('cad-app',`:host{display:flex;flex-direction:column;height:100vh;position:relative}title-bar,ribbon-tabs,ribbon-bar,file-tabs,layout-tabs,status-bar{flex:none}`,
`<title-bar></title-bar><ribbon-tabs></ribbon-tabs><ribbon-bar></ribbon-bar><file-tabs></file-tabs><drawing-view></drawing-view><layout-tabs></layout-tabs><status-bar></status-bar><command-line></command-line>`);
</script>
</body>
</html>
